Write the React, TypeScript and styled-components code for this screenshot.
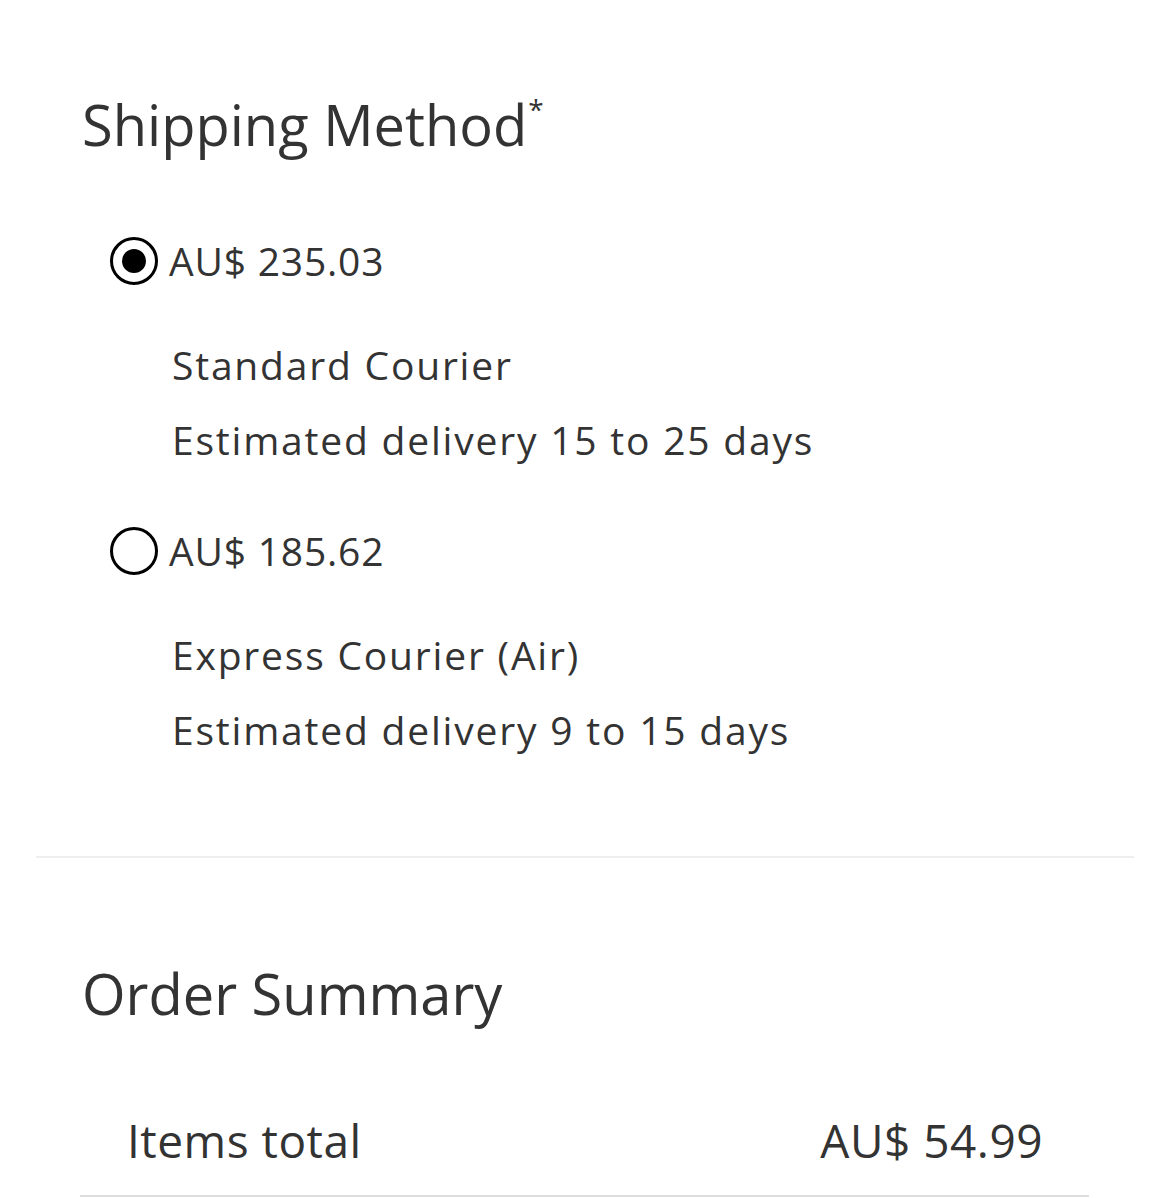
import * as React from 'react';
import styled, { createGlobalStyle } from 'styled-components';

type ShippingOption = {
  price: string;
  title: string;
  eta: string;
};

const OPTIONS: ShippingOption[] = [
  { price: 'AU$ 235.03', title: 'Standard Courier', eta: 'Estimated delivery 15 to 25 days' },
  { price: 'AU$ 185.62', title: 'Express Courier (Air)', eta: 'Estimated delivery 9 to 15 days' },
];

const GlobalStyle = createGlobalStyle`
  html, body {
    margin: 0;
    padding: 0;
    background: #ffffff;
  }
  body {
    font-family: "Open Sans", "Noto Sans", sans-serif;
    color: #333333;
  }
`;

const Page = styled.div`
  width: 1170px;
  min-height: 1198px;
  overflow: hidden;
`;

const Section = styled.section`
  padding-left: 82px;
`;

const ShippingSection = styled(Section)`
  padding-top: 88px;
`;

const Heading = styled.h2`
  margin: 0;
  font-size: 56px;
  line-height: 72px;
  font-weight: 400;
  color: #333333;
`;

const Required = styled.sup`
  font-size: 28px;
  line-height: 0;
  vertical-align: 26px;
  margin-left: 1px;
`;

const OptionList = styled.div`
  margin-top: 77px;
  margin-left: 28px;
  display: flex;
  flex-direction: column;
  gap: 50px;
`;

const Option = styled.label`
  display: flex;
  flex-direction: column;
  cursor: pointer;
`;

const PriceRow = styled.div`
  display: flex;
  align-items: center;
  gap: 11px;
  height: 48px;
`;

const Radio = styled.span<{ $checked: boolean }>`
  box-sizing: border-box;
  width: 48px;
  height: 48px;
  border: 3px solid #000000;
  border-radius: 50%;
  display: flex;
  align-items: center;
  justify-content: center;
  flex-shrink: 0;

  &::after {
    content: '';
    width: 24px;
    height: 24px;
    border-radius: 50%;
    background: #000000;
    display: ${(p) => (p.$checked ? 'block' : 'none')};
  }
`;

const Price = styled.span`
  font-size: 39px;
  line-height: 48px;
  letter-spacing: 0.8px;
`;

const Details = styled.div`
  margin-top: 42px;
  padding-left: 62px;
  display: flex;
  flex-direction: column;
`;

const DetailLine = styled.div`
  font-size: 39px;
  line-height: 75px;
  letter-spacing: 1.8px;
  white-space: nowrap;
`;

const Divider = styled.hr`
  margin: 89px 36px 0;
  border: 0;
  height: 2px;
  background: #eeeeee;
`;

const SummarySection = styled(Section)`
  padding-top: 99px;
`;

const SummaryTable = styled.div`
  margin: 66px 81px 0 -2px;
`;

const SummaryRow = styled.div`
  display: flex;
  justify-content: space-between;
  align-items: center;
  padding: 20px 46px 30px 47px;
  border-bottom: 2px solid #dddddd;
  font-size: 46px;
  line-height: 50px;
  letter-spacing: 0.5px;
`;

export default function App() {
  const [selected, setSelected] = React.useState(0);

  return (
    <Page>
      <GlobalStyle />
      <ShippingSection>
        <Heading>
          Shipping Method<Required>*</Required>
        </Heading>
        <OptionList>
          {OPTIONS.map((opt, i) => (
            <Option key={opt.price} onClick={() => setSelected(i)}>
              <PriceRow>
                <Radio $checked={selected === i} />
                <Price>{opt.price}</Price>
              </PriceRow>
              <Details>
                <DetailLine>{opt.title}</DetailLine>
                <DetailLine>{opt.eta}</DetailLine>
              </Details>
            </Option>
          ))}
        </OptionList>
      </ShippingSection>
      <Divider />
      <SummarySection>
        <Heading>Order Summary</Heading>
        <SummaryTable>
          <SummaryRow>
            <span>Items total</span>
            <span>AU$ 54.99</span>
          </SummaryRow>
        </SummaryTable>
      </SummarySection>
    </Page>
  );
}
